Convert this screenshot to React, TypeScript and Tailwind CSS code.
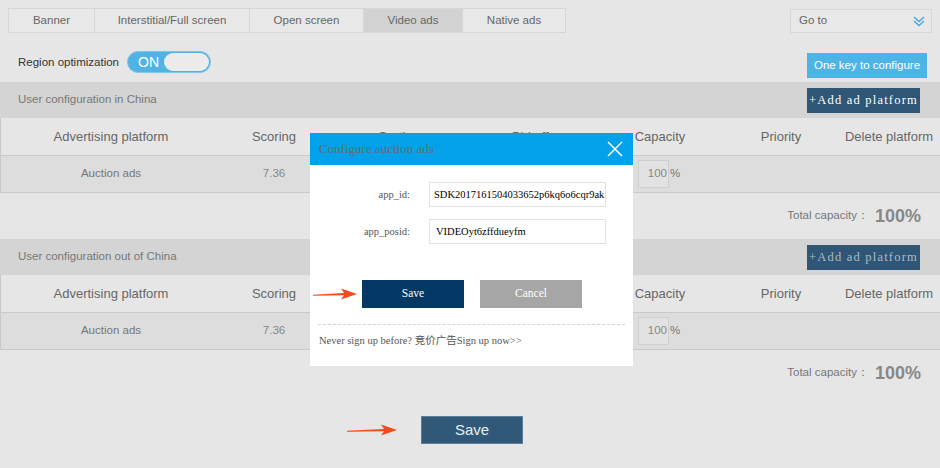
import React from "react";

const tabs = [
  { label: "Banner", w: "w-[87px]" },
  { label: "Interstitial/Full screen", w: "w-[156px]" },
  { label: "Open screen", w: "w-[115px]" },
  { label: "Video ads", w: "w-[100px]", active: true },
  { label: "Native ads", w: "w-[104px]" },
];

const cols = "grid grid-cols-[220px_106px_144px_130px_118px_124px_92px]";

const DoubleChevron = () => (
  <svg width="14" height="14" viewBox="0 0 14 14" fill="none">
    <path d="M2 3L7 7.5L12 3" stroke="#4aa8dc" strokeWidth="1.4" />
    <path d="M2 7L7 11.5L12 7" stroke="#4aa8dc" strokeWidth="1.4" />
  </svg>
);

const RedArrow = ({ w }: { w: number }) => (
  <svg width={w} height="14" viewBox={`0 0 ${w} 14`}>
    <path d={`M0 7.8L${w - 13} 6L${w - 16} 1.5L${w} 7L${w - 16} 12.5L${w - 13} 8.2L0 8.8Z`} fill="#f24a1c" />
  </svg>
);

function Section({ title, muted }: { title: string; muted?: boolean }) {
  return (
    <div>
      <div className="h-[36px] bg-[#d4d4d4] flex items-center justify-between pl-[18px] pr-[20px]">
        <span className="text-[11.5px] text-[#777]">{title}</span>
        <button
          className={`h-[25px] w-[113px] bg-[#2f5577] text-[12.5px] tracking-[1.2px] ${muted ? "text-white/60" : "text-white"}`}
          style={{ fontFamily: '"Liberation Serif", serif' }}
        >
          +Add ad platform
        </button>
      </div>
      <div className="border-l border-[#c8c8c8]">
        <div className={`${cols} h-[38px] items-center border-b border-[#c9c9c9] text-[13px] text-[#666] text-center whitespace-nowrap`}>
          <span>Advertising platform</span>
          <span>Scoring</span>
          <span>Sorting</span>
          <span>Bid offer</span>
          <span>Capacity</span>
          <span>Priority</span>
          <span>Delete platform</span>
        </div>
        <div className={`${cols} h-[37px] items-center bg-[#dddddd] border-b border-[#c9c9c9] text-[11.5px] text-[#777] text-center`}>
          <span>Auction ads</span>
          <span className="text-[#888]">7.36</span>
          <span />
          <span />
          <div className="flex items-center pl-[37px]">
            <div className="w-[31px] h-[28px] border border-[#cfcfcf] bg-[#e2e2e2] flex items-center justify-end pr-[1px] text-[#888]">100</div>
            <span className="ml-[1px]">%</span>
          </div>
          <span />
          <span />
        </div>
      </div>
      <div className="h-[46px] flex items-center justify-end pr-[19px]">
        <span className="text-[11.5px] text-[#777]">Total capacity：</span>
        <span className="ml-[6px] text-[18px] font-bold text-[#888]">100%</span>
      </div>
    </div>
  );
}

export default function App() {
  return (
    <div
      className="relative w-[940px] h-[468px] overflow-hidden bg-[#e6e6e6]"
      style={{ fontFamily: '"Liberation Sans", Arial, sans-serif' }}
    >
      {/* tabs */}
      <div className="flex items-start justify-between pt-[8px] pl-[8px] pr-[8px]">
        <div className="flex">
          {tabs.map((t) => (
            <div
              key={t.label}
              className={`${t.w} h-[25px] flex items-center justify-center border border-[#d6d6d6] -ml-px first:ml-0 text-[11.5px] text-[#666] ${t.active ? "bg-[#d2d2d2]" : "bg-[#e8e8e8]"}`}
            >
              {t.label}
            </div>
          ))}
        </div>
        <div className="mt-[1px] w-[142px] h-[24px] border border-[#d8d8d8] bg-[#e8e8e8] flex items-center justify-between pl-[8px] pr-[5px] text-[11.5px] text-[#666]">
          <span>Go to</span>
          <DoubleChevron />
        </div>
      </div>

      {/* region optimization */}
      <div className="flex items-start justify-between pl-[18px] pr-[13px] mt-[18px] h-[32px]">
        <div className="flex items-center">
          <span className="text-[11.5px] text-[#333] pt-[2px]">Region optimization</span>
          <div className="ml-[8px] w-[84px] h-[22px] rounded-full bg-[#4fb3e6] border border-[#7fc6ec] flex items-center pl-[10px] pr-[1px]">
            <span className="text-white text-[14px] leading-none">ON</span>
            <div className="ml-auto w-[45px] h-[18px] rounded-full bg-[#ececec]" />
          </div>
        </div>
        <button className="w-[120px] h-[25px] bg-[#4cb5e6] text-white text-[11.5px] mt-[2px]">One key to configure</button>
      </div>

      <div className="-mt-[1px]">
        <Section title="User configuration in China" />
        <Section title="User configuration out of China" muted />
      </div>

      {/* bottom save */}
      <div className="flex justify-center pl-[4px] mt-[20px]">
        <button className="w-[102px] h-[28px] bg-[#305878] border border-[#5a7d99] text-[#e8eef3] text-[15px]">Save</button>
      </div>
      <div className="absolute left-[347px] top-[423px]">
        <RedArrow w={50} />
      </div>

      {/* modal */}
      <div
        className="absolute left-[310px] top-[133px] w-[323px] h-[233px] bg-white"
        style={{ fontFamily: '"Liberation Serif", "Noto Sans CJK SC", serif' }}
      >
        <div className="h-[32px] bg-[#03a1e9] flex items-center justify-between pl-[9px] pr-[10px]">
          <span className="text-[13px] text-[#6b6b6b]">Configure auction ads</span>
          <svg width="16" height="16" viewBox="0 0 16 16">
            <path d="M1 1L15 15M15 1L1 15" stroke="white" strokeWidth="1.5" />
          </svg>
        </div>
        <div className="pt-[17px] flex flex-col gap-[12px]">
          <div className="flex items-center">
            <span className="w-[100px] text-right text-[10.5px] text-[#555]">app_id:</span>
            <div className="ml-[19px] w-[177px] h-[25px] border border-[#e2e2e2] flex items-center pl-[4px] text-[10.5px] text-black whitespace-nowrap overflow-hidden">
              SDK2017161504033652p6kq6o6cqr9ak
            </div>
          </div>
          <div className="flex items-center">
            <span className="w-[100px] text-right text-[10.5px] text-[#555]">app_posid:</span>
            <div className="ml-[19px] w-[177px] h-[25px] border border-[#e2e2e2] flex items-center pl-[6px] text-[10.5px] text-black">
              VIDEOyt6zffdueyfm
            </div>
          </div>
        </div>
        <div className="flex mt-[36px] pl-[52px] gap-[16px]">
          <button className="w-[102px] h-[28px] bg-[#033764] text-white text-[11.5px]">Save</button>
          <button className="w-[102px] h-[28px] bg-[#a6a6a6] text-white text-[11.5px]">Cancel</button>
        </div>
        <div className="mx-[8px] mt-[16px] border-t border-dashed border-[#d4d4d4]" />
        <div className="pl-[9px] mt-[8px] text-[10.5px] text-[#555]">Never sign up before? 竞价广告Sign up now&gt;&gt;</div>
        <div className="absolute left-[3px] top-[154px]">
          <RedArrow w={44} />
        </div>
      </div>
    </div>
  );
}
